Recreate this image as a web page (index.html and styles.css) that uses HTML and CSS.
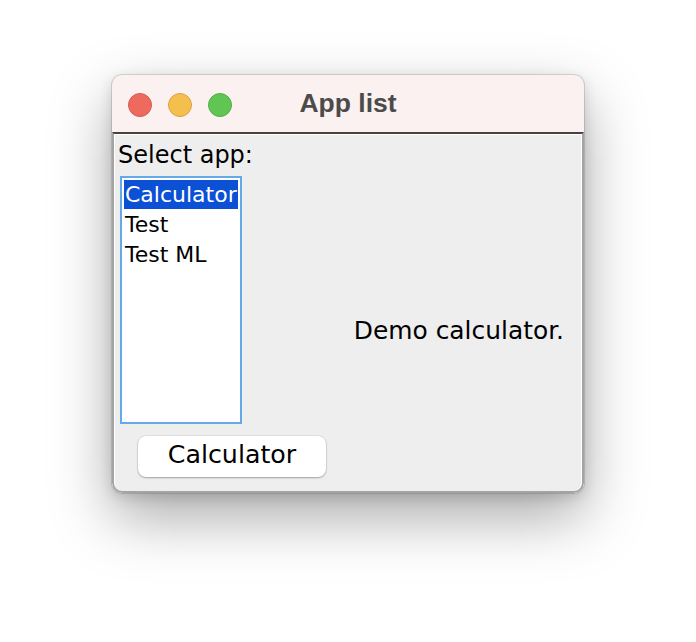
FILE: index.html
```html
<!DOCTYPE html>
<html>
<head>
<meta charset="utf-8">
<link rel="stylesheet" href="styles.css">
</head>
<body>
<div class="window">
  <div class="titlebar">
    <div class="lights">
      <span class="light red"></span>
      <span class="light yellow"></span>
      <span class="light green"></span>
    </div>
    <div class="title">App list</div>
    <div></div>
  </div>
  <div class="content">
    <div class="top-row">
      <div class="left-col">
        <div class="label">Select app:</div>
        <div class="list">
          <div class="row selected">Calculator</div>
          <div class="row">Test</div>
          <div class="row">Test ML</div>
        </div>
      </div>
      <div class="desc">Demo calculator.</div>
    </div>
    <div class="bottom-row">
      <button class="btn">Calculator</button>
    </div>
  </div>
</div>
</body>
</html>
```

FILE: styles.css
```css
html, body {
  margin: 0;
  background: #ffffff;
  height: 100%;
}
body {
  box-sizing: border-box;
  min-height: 642px;
  padding: 75px 0 0 112px;
  font-family: "DejaVu Sans", "Liberation Sans", sans-serif;
}
.window {
  width: 472px;
  height: 418px;
  border-radius: 10px;
  overflow: hidden;
  background: #fbf1f1;
  box-shadow: 0 0 0 1px rgba(0,0,0,0.12), 0 24px 60px rgba(0,0,0,0.34), 0 4px 14px rgba(0,0,0,0.14);
  display: flex;
  flex-direction: column;
}
.titlebar {
  height: 57px;
  flex: none;
  display: grid;
  grid-template-columns: 1fr auto 1fr;
  align-items: start;
}
.lights {
  display: flex;
  gap: 16px;
  padding: 18px 0 0 16px;
}
.light {
  width: 22px;
  height: 22px;
  border-radius: 50%;
  border: 1px solid;
  display: block;
}
.red { background: #ee6a5f; border-color: #d65a50; }
.yellow { background: #f5bf4f; border-color: #d9a53d; }
.green { background: #61c554; border-color: #52ad45; }
.title {
  font-family: "Liberation Sans", Arial, sans-serif;
  font-weight: bold;
  font-size: 26.5px;
  line-height: 57px;
  color: #4b4b4b;
}
.content {
  flex: 1;
  background: #eeeeee;
  border-top: 2px solid #444444;
  border-left: 2px solid #a4a4a4;
  border-right: 2px solid #a4a4a4;
  border-bottom: 2px solid #a4a4a4;
  border-radius: 0 0 10px 10px;
  box-shadow: inset 1px 1px 0 #ffffff, inset -1px 0 0 #ffffff;
  display: flex;
  flex-direction: column;
  padding-top: 7px;
}
.top-row {
  display: flex;
}
.left-col {
  display: flex;
  flex-direction: column;
  padding-left: 4px;
}
.label {
  font-size: 24px;
  line-height: 28px;
  color: #000;
}
.list {
  margin-top: 7px;
  margin-left: 2px;
  width: 114px;
  height: 240px;
  border: 2px solid #64a9ea;
  padding: 2px;
  background: #ffffff;
}
.row {
  font-size: 22px;
  line-height: 30px;
  height: 30px;
  padding-left: 1px;
  color: #000;
  white-space: nowrap;
}
.row.selected {
  background: #0b50d5;
  color: #ffffff;
  height: 29px;
  margin-bottom: 1px;
}
.desc {
  margin-left: auto;
  margin-top: 176px;
  padding-right: 18px;
  font-size: 24.9px;
  line-height: 28px;
  color: #000;
  white-space: nowrap;
}
.bottom-row {
  margin-top: 12px;
  padding-left: 24px;
}
.btn {
  width: 188px;
  height: 41px;
  border: none;
  border-radius: 8px;
  background: #ffffff;
  box-shadow: 0 0 0 0.5px rgba(0,0,0,0.12), 0 1px 2px rgba(0,0,0,0.28);
  font-family: "DejaVu Sans", sans-serif;
  font-size: 25.3px;
  line-height: 38px;
  padding: 0 0 3px 0;
  color: #000;
}
```
